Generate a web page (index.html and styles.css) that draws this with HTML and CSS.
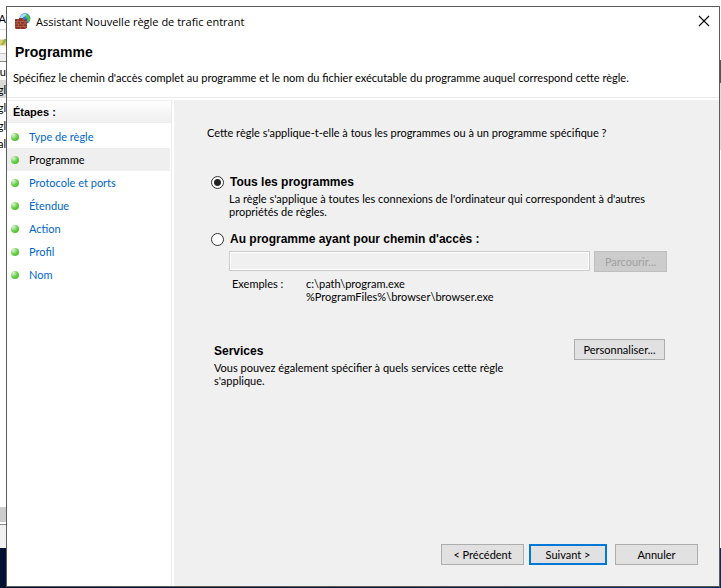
FILE: index.html
```html
<!DOCTYPE html>
<html lang="fr">
<head>
    <meta charset="UTF-8">
    <meta name="viewport" content="width=device-width, initial-scale=1.0">
    <title>Assistant Nouvelle règle de trafic entrant</title>
    <link rel="stylesheet" href="styles.css">
</head>
<body>
    <!-- window behind the wizard -->
    <div class="backdrop" aria-hidden="true">
        <div class="backdrop-strip">
            <div class="strip-menu">A</div>
            <div class="strip-tool">
                <svg width="12" height="16" viewBox="0 0 12 16">
                    <rect y="3" width="12" height="12" fill="#e8c878"/>
                    <path d="M2 13 C5 12 6 9 7 7 L6 5 L11 2 L12 5 L10 7 C9 11 6 13 3 14 Z" fill="#7ccc3c" stroke="#4c9c24" stroke-width=".7"/>
                </svg>
            </div>
            <div class="strip-bar"></div>
            <ul class="strip-list">
                <li>eu</li>
                <li class="active">gl</li>
                <li>gl</li>
                <li>gl</li>
                <li>al</li>
            </ul>
            <div class="strip-scroll"></div>
            <div class="strip-status"></div>
        </div>
        <div class="backdrop-edge"></div>
    </div>

    <div class="dialog" role="dialog" aria-labelledby="title">
        <header>
            <div class="titlebar">
                <svg class="app-icon" width="16" height="16" viewBox="0 0 16 16">
                    <circle cx="10" cy="5.500" r="5.400" fill="#2c7cd4"/>
                    <path d="M5 4 C6.500 1 9.500 0 12 .8 L11 3 L8.500 4 L7.500 6 L5 6 Z" fill="#a8dcf4"/>
                    <path d="M11 1 L14 2.500 L15.200 6 L13.500 9 L12 7.500 L12.500 5.500 L10.500 4 Z" fill="#54c048"/>
                    <path d="M0 6 H4 V5 H8 V6.500 H12 V15 L10 16 H1 L0 15 Z" fill="#8c3424"/>
                    <path d="M0 8.500 H12 M0 11 H12 M0 13.500 H12 M3 6 V8.500 M8 6 V8.500 M5.500 8.500 V11 M10 8.500 V11 M2 8.500 V11 M3.500 11 V13.500 M8 11 V13.500 M5.500 13.500 V16 M10 13.500 V16" stroke="#c87c64" stroke-width=".5" fill="none"/>
                </svg>
                <span class="title" id="title">Assistant Nouvelle règle de trafic entrant</span>
                <button class="close" type="button" aria-label="Fermer">
                    <svg width="12" height="12" viewBox="0 0 12 12">
                        <path d="M1 1 L11 11 M11 1 L1 11" stroke="#000" stroke-width="1.1"/>
                    </svg>
                </button>
            </div>
            <h1>Programme</h1>
            <p class="intro">Spécifiez le chemin d'accès complet au programme et le nom du fichier exécutable du programme auquel correspond cette règle.</p>
        </header>

        <div class="wizard">
            <nav>
                <h2>Étapes :</h2>
                <ul class="steps">
                    <li><a href="#">Type de règle</a></li>
                    <li class="active"><a href="#" aria-current="step">Programme</a></li>
                    <li><a href="#">Protocole et ports</a></li>
                    <li><a href="#">Étendue</a></li>
                    <li><a href="#">Action</a></li>
                    <li><a href="#">Profil</a></li>
                    <li><a href="#">Nom</a></li>
                </ul>
            </nav>

            <main>
                <p class="question">Cette règle s'applique-t-elle à tous les programmes ou à un programme spécifique ?</p>

                <div class="option">
                    <input type="radio" name="program" id="all" checked>
                    <label for="all">Tous les programmes</label>
                    <p class="option-body">La règle s'applique à toutes les connexions de l'ordinateur qui correspondent à d'autres propriétés de règles.</p>
                </div>

                <div class="option">
                    <input type="radio" name="program" id="path">
                    <label for="path" id="path-label">Au programme ayant pour chemin d'accès :</label>
                    <div class="option-body">
                        <div class="path-row">
                            <input type="text" class="path-input" aria-labelledby="path-label" disabled>
                            <button type="button" class="browse" disabled>Parcourir...</button>
                        </div>
                        <dl class="examples">
                            <dt>Exemples :</dt>
                            <dd>c:\path\program.exe<br>%ProgramFiles%\browser\browser.exe</dd>
                        </dl>
                    </div>
                </div>

                <section class="services">
                    <div class="services-text">
                        <h3>Services</h3>
                        <p>Vous pouvez également spécifier à quels services cette règle s'applique.</p>
                    </div>
                    <button type="button" class="customize">Personnaliser...</button>
                </section>

                <footer>
                    <button type="button">&lt; Précédent</button>
                    <button type="button" class="default">Suivant &gt;</button>
                    <button type="button" class="cancel">Annuler</button>
                </footer>
            </main>
        </div>
    </div>
</body>
</html>
```
FILE: styles.css
```css
*{
    margin: 0;
    padding: 0;
    box-sizing: border-box;
}

body{
    position: relative;
    display: flex;
    min-height: 100vh;
    padding: 6px 1px 1px 6px;
    background: linear-gradient(to right, #001030, #00305c);
    color: #000;
    font-family: Lato, "Liberation Sans", sans-serif;
    font-size: 11px;
    line-height: 13px;
    overflow: hidden;
}

ul{
    list-style: none;
}

/* window behind */

.backdrop{
    position: absolute;
    top: 0;
    left: 0;
    right: 0;
    bottom: 40px;
    display: flex;
    justify-content: space-between;
    background-color: #fff;
}

.backdrop-strip{
    display: flex;
    flex-direction: column;
    width: 6px;
    overflow: hidden;
}

.backdrop-strip > div,
.strip-list li{
    display: flex;
    align-items: center;
    justify-content: flex-end;
    flex-shrink: 0;
}

.strip-menu{
    height: 30px;
    padding-top: 8px;
    border-bottom: 1px solid #ddd;
}

.strip-tool{
    height: 23px;
}

.strip-bar{
    height: 9px;
    background-color: #f0f0f0;
    border-top: 1px solid #ccc;
    border-bottom: 1px solid #888;
}

.strip-list{
    flex: 1;
}

.strip-list li{
    height: 18px;
}

.strip-list .active{
    background-color: #d9d9d9;
}

.strip-scroll{
    height: 15px;
    background-color: #ccc;
}

.strip-status{
    height: 24px;
    margin-top: 2px;
    background-color: #f0f0f0;
    border-top: 1px solid #828790;
}

.backdrop-edge{
    width: 1px;
    background: linear-gradient(#fff 60px, #555 60px, #555 83px, #ddd 83px, #ddd 150px, #fff 150px);
}

/* wizard */

.dialog{
    position: relative;
    flex: 1;
    display: flex;
    flex-direction: column;
    background-color: #fff;
    border: 1px solid #5c5c5c;
}

header{
    padding-bottom: 13px;
    border-bottom: 1px solid #ebebeb;
}

.titlebar{
    display: flex;
    align-items: center;
    height: 28px;
    padding: 0 9px 0 8px;
    font-family: "Open Sans", "Segoe UI", sans-serif;
    font-size: 11px;
}

.title{
    margin-left: 5px;
}

.close{
    display: flex;
    margin-left: auto;
    min-width: 0;
    height: 12px;
    background: none;
    border: none;
}

h1,
h2,
h3,
.option label{
    font-family: "Liberation Sans", Arial, sans-serif;
    font-weight: bold;
}

h1{
    padding: 9px 8px 0;
    font-size: 14px;
    line-height: 16px;
}

.intro{
    padding: 11px 6px 0;
}

.wizard{
    flex: 1;
    display: flex;
    padding-top: 2px;
}

nav{
    width: 165px;
    margin-right: 2px;
    border-right: 1px solid #ebebeb;
}

h2{
    height: 23px;
    padding-left: 6px;
    font-size: 11px;
    line-height: 23px;
    background: linear-gradient(#fff, #eee);
    border-top: 1px solid #f0f0f0;
}

.steps{
    padding: 2px 1px 0 0;
}

.steps li{
    display: flex;
    align-items: center;
    height: 23px;
    padding-left: 4px;
}

.steps li::before{
    content: "";
    width: 8px;
    height: 8px;
    margin-right: 10px;
    border-radius: 50%;
    background: radial-gradient(circle at 30% 25%, #e0f4d8, #5ccc3c 55%, #4cb42c);
}

.steps a{
    color: #0066cc;
    text-decoration: none;
}

.steps .active{
    background-color: #efefef;
}

.steps .active a{
    color: #000;
}

main{
    flex: 1;
    display: flex;
    flex-direction: column;
    padding: 26px 21px 21px 33px;
    background-color: #f0f0f0;
}

.question{
    margin-bottom: 36px;
}

.option{
    display: grid;
    grid-template-columns: 18px 1fr;
    align-items: center;
    margin: 0 31px 14px 4px;
}

.option label,
h3{
    font-size: 12px;
    line-height: 15px;
}

.option label{
    padding-left: 1px;
}

.option-body{
    grid-column: 2;
    margin-top: 2px;
}

p.option-body{
    max-width: 430px;
}

input[type="radio"]{
    appearance: none;
    width: 13px;
    height: 13px;
    border: 1px solid #333;
    border-radius: 50%;
    background-color: #fff;
}

input[type="radio"]:checked{
    background: radial-gradient(circle, #222 3px, #fff 4px);
}

.path-row{
    display: flex;
    gap: 4px;
    margin-top: 2px;
}

.path-input{
    flex: 1;
    min-width: 0;
    height: 20px;
    background-color: #f0f0f0;
    border: 1px solid #ccc;
    box-shadow: inset 0 0 0 1px #fff;
}

.examples{
    display: flex;
    margin-top: 5px;
    padding-left: 3px;
}

.examples dt{
    width: 74px;
}

.services{
    display: flex;
    justify-content: space-between;
    align-items: flex-start;
    margin: 22px 33px 0 7px;
}

.services-text{
    max-width: 300px;
    padding-top: 5px;
}

.services-text p{
    margin-top: 2px;
}

button{
    min-width: 83px;
    height: 21px;
    background-color: #e1e1e1;
    border: 1px solid #adadad;
    color: #000;
    font-family: inherit;
    font-size: 11px;
}

.browse{
    min-width: 73px;
}

.browse:disabled{
    background-color: #ccc;
    border-color: #bfbfbf;
    color: #a0a0a0;
}

.customize{
    min-width: 91px;
}

footer{
    display: flex;
    justify-content: flex-end;
    gap: 5px;
    margin-top: auto;
}

.default{
    min-width: 78px;
    border: 2px solid #0078d7;
}

.cancel{
    margin-left: 3px;
}
```
